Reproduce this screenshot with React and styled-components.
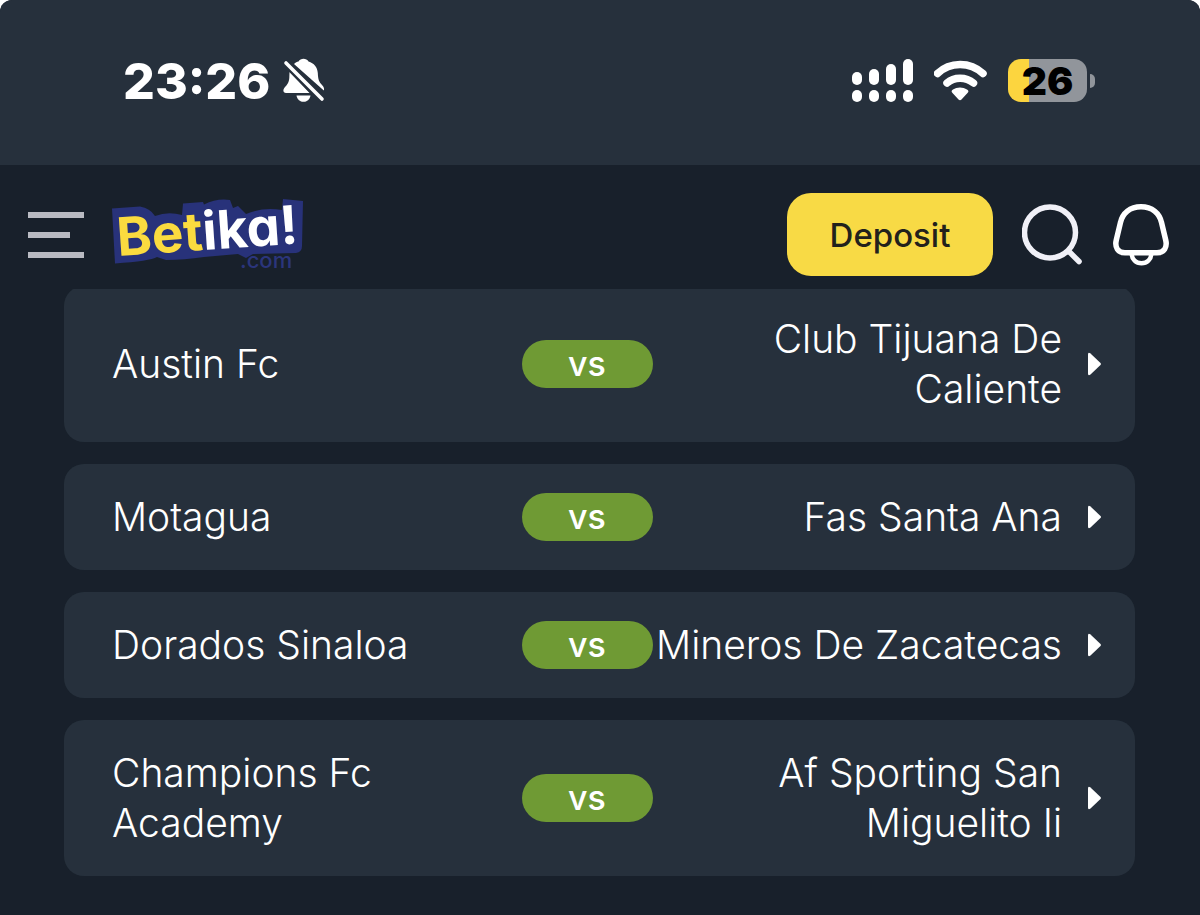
import React from 'react';
import styled, { createGlobalStyle } from 'styled-components';

const matches = [
    { id: 1, home: 'Austin Fc', away: 'Club Tijuana De Caliente' },
    { id: 2, home: 'Motagua', away: 'Fas Santa Ana' },
    { id: 3, home: 'Dorados Sinaloa', away: 'Mineros De Zacatecas' },
    { id: 4, home: 'Champions Fc Academy', away: 'Af Sporting San Miguelito Ii' },
];

const signalBars = [
    { x: 0, y: 13, height: 13 },
    { x: 17, y: 10, height: 16 },
    { x: 34, y: 5, height: 21 },
    { x: 51, y: 0, height: 26 },
];

function BellOff() {
    return (
        <svg width="43" height="46" viewBox="0 0 43 46" aria-label="Silent mode">
            <g fill="#fff">
                <path d="M11 6 C12.5 4.5 14 4 15.500 3.600 C16.500 1.500 18.500 0.700 20.500 0.700 C22.500 0.700 24.500 1.500 25.500 3.600 C31 5.200 34.500 9.500 34.800 15 C35 21 36 24 39 27 C41 29 41.500 31 40.800 32.500 Z" />
                <path d="M6.500 14 L26.500 35 H3 C0.500 35 -0.300 32.500 1 30.500 C2 28.500 6 26 6.300 20 Z" />
                <path d="M13.500 37.500 H27.500 C26.800 41.500 24 43.800 20.500 43.800 C17 43.800 14.200 41.500 13.500 37.500 Z" />
            </g>
            <path d="M3 5 L39 41" stroke="#26303c" strokeWidth="8" />
            <path d="M3 5 L39 41" stroke="#fff" strokeWidth="3.600" strokeLinecap="round" />
        </svg>
    );
}

function Signal() {
    return (
        <svg width="62" height="43" viewBox="0 0 62 43" fill="#fff" aria-label="Signal">
            {signalBars.map((bar) => (
                <React.Fragment key={bar.x}>
                    <rect x={bar.x} y={bar.y} width="10" height={bar.height} rx="5" />
                    <rect x={bar.x} y="31" width="10" height="12" rx="5" />
                </React.Fragment>
            ))}
        </svg>
    );
}

function Wifi() {
    return (
        <svg width="54" height="42" viewBox="0 0 54 42" fill="none" aria-label="Wi-Fi">
            <path d="M3.500 13.500 C16 1.500 36 1.500 49 13.500" stroke="#fff" strokeWidth="7.500" strokeLinecap="round" />
            <path d="M13 23 C20 16.500 32 16.500 39.500 23" stroke="#fff" strokeWidth="7.500" strokeLinecap="round" />
            <path d="M18.500 33 C17 31.500 17.500 30.500 19 29.500 C23 26.800 29 26.800 33 29.500 C34.500 30.500 35 31.500 33.500 33 L27.500 39.500 Q26 41 24.500 39.500 Z" fill="#fff" />
        </svg>
    );
}

function Logo() {
    return (
        <LogoDrawing width="192" height="74" viewBox="0 0 192 74" aria-label="Betika.com">
            <path
                d="M0 10.500 L28 8.500 Q38 10 43 18 Q56 13 70 17 L71 5.500 L91 4 L92 6.500 Q105 0 118 2 L121 10 L126 8 L134 16 Q150 9 170 12 L171 1 L191 3 L190 48 Q190 54 184 55 L141 56 L134 60 L126 56 L92 59 Q72 62 54 62 L45 59 Q38 63 3 65.500 Z"
                fill="#28327a"
            />
            <LogoText x="6" y="58" transform="rotate(-4 6 58)">
                <tspan fill="#fbdb3f">Bet</tspan>
                <tspan fill="#fff">ika!</tspan>
            </LogoText>
            <LogoSuffix x="128" y="70">.com</LogoSuffix>
        </LogoDrawing>
    );
}

function SearchIcon() {
    return (
        <svg width="62" height="62" viewBox="0 0 62 62" fill="none" stroke="#f0f0f7" strokeLinecap="round">
            <circle cx="28" cy="28.500" r="25.500" strokeWidth="5.500" />
            <path d="M46.500 47 L57 57.500" strokeWidth="5.500" />
        </svg>
    );
}

function BellIcon() {
    return (
        <svg width="56" height="62" viewBox="0 0 56 62" fill="none" stroke="#fff" strokeWidth="5.500">
            <path d="M28 2.800 C17 2.800 9.500 9 7.500 18.500 L3.300 36 C1.500 43.500 5 48.800 12 48.800 H44 C51 48.800 54.500 43.500 52.700 36 L48.500 18.500 C46.500 9 39 2.800 28 2.800 Z" />
            <path d="M18.500 49.500 C19 55.500 23 59.200 28.500 59.200 C34 59.200 38 55.500 38.500 49.500" strokeWidth="4.500" />
        </svg>
    );
}

function MatchRow({ match }) {
    return (
        <li>
            <Card href={`#match-${match.id}`}>
                <Team>{match.home}</Team>
                <Versus>vs</Versus>
                <Team $away>{match.away}</Team>
                <svg width="15" height="26" viewBox="0 0 15 26" aria-hidden="true">
                    <path d="M1 3.500 Q1 0.500 3.500 2.500 L13.500 12 Q14.500 13 13.500 14 L3.500 23.500 Q1 25.500 1 22.500 Z" fill="#fff" />
                </svg>
            </Card>
        </li>
    );
}

function App() {
    return (
        <>
            <GlobalStyle />
            <Screen>
                <StatusBar>
                    <StatusGroup $gap="13px">
                        <Clock>23:26</Clock>
                        <BellOff />
                    </StatusGroup>
                    <StatusGroup $gap="20px">
                        <Signal />
                        <Wifi />
                        <BatteryWrap>
                            <Battery>26</Battery>
                            <BatteryTip />
                        </BatteryWrap>
                    </StatusGroup>
                </StatusBar>

                <Header>
                    <MenuButton aria-label="Menu">
                        <MenuLine />
                        <MenuLine $short />
                        <MenuLine />
                    </MenuButton>
                    <LogoLink href="#home"><Logo /></LogoLink>
                    <DepositButton>Deposit</DepositButton>
                    <IconButton aria-label="Search"><SearchIcon /></IconButton>
                    <IconButton aria-label="Notifications"><BellIcon /></IconButton>
                </Header>

                <MatchList>
                    {matches.map((match) => <MatchRow key={match.id} match={match} />)}
                </MatchList>
            </Screen>
        </>
    );
}

export default App

const GlobalStyle = createGlobalStyle`
    * {
        box-sizing: border-box;
    }
    body {
        margin: 0;
        background: #fff;
        font-family: Inter, "Liberation Sans", sans-serif;
        font-optical-sizing: none;
    }
    button {
        border: none;
        padding: 0;
        background: none;
        font-family: inherit;
        cursor: pointer;
    }
    svg {
        display: block;
        flex-shrink: 0;
    }
`;
const Screen = styled.div`
    min-height: 100vh;
    background: #18202b;
    border-radius: 12px 12px 0 0;
    overflow: hidden;
`;
const StatusBar = styled.div`
    display: flex;
    justify-content: space-between;
    align-items: center;
    height: 165px;
    padding: 0 105px 4px 123px;
    background: #26303c;
`;
const StatusGroup = styled.div`
    display: flex;
    align-items: center;
    gap: ${({ $gap }) => $gap};
`;
const Clock = styled.time`
    color: #fff;
    font-size: 50px;
    font-weight: 800;
    line-height: 60px;
`;
const BatteryWrap = styled.div`
    display: flex;
    align-items: center;
    gap: 3px;
`;
const Battery = styled.div`
    width: 79px;
    height: 43px;
    border-radius: 13px;
    background: linear-gradient(to right, #fcd53f 27%, #91959b 27%);
    color: #000;
    font-size: 39px;
    font-weight: 900;
    line-height: 43px;
    text-align: center;
`;
const BatteryTip = styled.div`
    width: 5px;
    height: 14px;
    border-radius: 0 5px 5px 0;
    background: #91959b;
`;
const Header = styled.header`
    position: relative;
    z-index: 1;
    display: flex;
    align-items: center;
    padding: 28px 31px 13px 28px;
    background: #18202b;
`;
const MenuButton = styled.button`
    display: flex;
    flex-direction: column;
    gap: 14px;
    width: 56px;
`;
const MenuLine = styled.span`
    width: ${({ $short }) => ($short ? '75%' : '100%')};
    height: 6px;
    background: #b9bac2;
`;
const LogoLink = styled.a`
    margin-left: 28px;
    margin-right: auto;
`;
const LogoDrawing = styled.svg`
    overflow: visible;
`;
const LogoText = styled.text`
    font-size: 53px;
    font-weight: 700;
    font-feature-settings: "cv11";
`;
const LogoSuffix = styled.text`
    fill: #2b357c;
    font-size: 22px;
    font-weight: 500;
`;
const DepositButton = styled.button`
    width: 206px;
    height: 83px;
    border-radius: 24px;
    background: #f8da45;
    color: #22211c;
    font-size: 33px;
    font-weight: 500;
`;
const IconButton = styled.button`
    margin-left: 29px;
`;
const MatchList = styled.ul`
    display: flex;
    flex-direction: column;
    gap: 22px;
    margin: -3px 0 0;
    padding: 0 65px 38px 64px;
    list-style: none;
`;
const Card = styled.a`
    display: flex;
    align-items: center;
    padding: 28px 33px 28px 48px;
    border-radius: 20px;
    background: #26303c;
    color: #fff;
    text-decoration: none;
`;
const Team = styled.span`
    flex: 1 1 0;
    margin-right: ${({ $away }) => ($away ? '25px' : '0')};
    font-size: 39px;
    font-weight: 300;
    line-height: 50px;
    text-align: ${({ $away }) => ($away ? 'right' : 'left')};
`;
const Versus = styled.span`
    width: 131px;
    border-radius: 24px;
    background: #6f9a34;
    font-size: 34px;
    font-weight: 500;
    line-height: 48px;
    text-align: center;
`;
